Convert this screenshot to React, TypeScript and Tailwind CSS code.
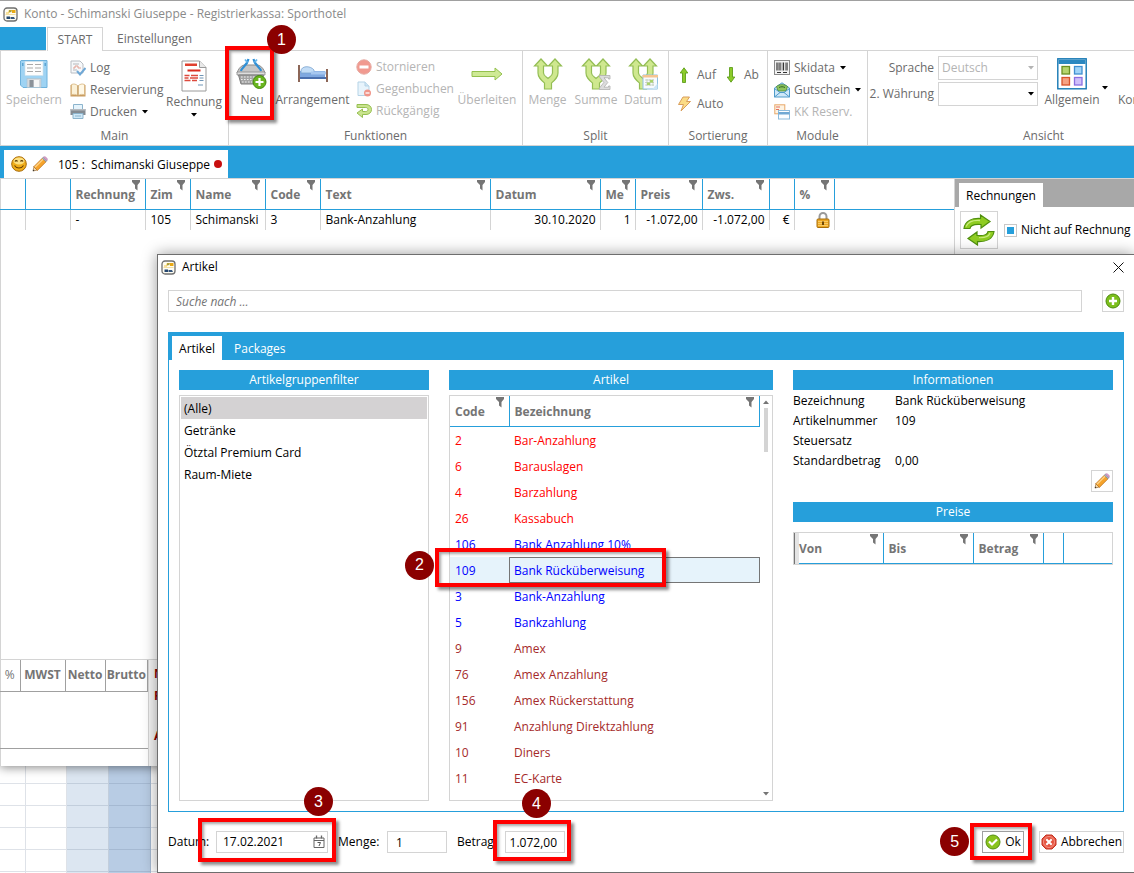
import type { ReactNode } from "react";
import clsx from "clsx";

type IconProps = { className?: string };

type Article = {
  code: string;
  name: string;
  color: string;
};

const articles: Article[] = [
  { code: "2", name: "Bar-Anzahlung", color: "text-[#ff0000]" },
  { code: "6", name: "Barauslagen", color: "text-[#ff0000]" },
  { code: "4", name: "Barzahlung", color: "text-[#ff0000]" },
  { code: "26", name: "Kassabuch", color: "text-[#ff0000]" },
  { code: "106", name: "Bank Anzahlung 10%", color: "text-[#0000ff]" },
  { code: "109", name: "Bank Rücküberweisung", color: "text-[#0000ff]" },
  { code: "3", name: "Bank-Anzahlung", color: "text-[#0000ff]" },
  { code: "5", name: "Bankzahlung", color: "text-[#0000ff]" },
  { code: "9", name: "Amex", color: "text-[#a52a2a]" },
  { code: "76", name: "Amex Anzahlung", color: "text-[#a52a2a]" },
  { code: "156", name: "Amex Rückerstattung", color: "text-[#a52a2a]" },
  { code: "91", name: "Anzahlung Direktzahlung", color: "text-[#a52a2a]" },
  { code: "10", name: "Diners", color: "text-[#a52a2a]" },
  { code: "11", name: "EC-Karte", color: "text-[#a52a2a]" },
];

const groups = ["(Alle)", "Getränke", "Ötztal Premium Card", "Raum-Miete"];

const bookingColumns = [
  { label: "", width: "w-[25px]", value: "", filter: false },
  { label: "", width: "w-[45px]", value: "", filter: false },
  { label: "Rechnung", width: "w-[75px]", value: "-", filter: true },
  { label: "Zim", width: "w-[45px]", value: "105", filter: true },
  { label: "Name", width: "w-[75px]", value: "Schimanski", filter: true },
  { label: "Code", width: "w-[55px]", value: "3", filter: true },
  { label: "Text", width: "w-[170px]", value: "Bank-Anzahlung", filter: true },
  { label: "Datum", width: "w-[110px]", value: "30.10.2020", filter: true, right: true },
  { label: "Me", width: "w-[35px]", value: "1", filter: true, right: true },
  { label: "Preis", width: "w-[67px]", value: "-1.072,00", filter: true, right: true },
  { label: "Zws.", width: "w-[67px]", value: "-1.072,00", filter: true, right: true },
  { label: "", width: "w-[25px]", value: "€", filter: false, right: true },
  { label: "%", width: "w-[40px]", value: "lock", filter: true, right: true },
];

const info = [
  ["Bezeichnung", "Bank Rücküberweisung"],
  ["Artikelnummer", "109"],
  ["Steuersatz", ""],
  ["Standardbetrag", "0,00"],
];

/* ---------- icons ---------- */

function LogoIcon() {
  return (
    <svg viewBox="0 0 15 15" className="size-[15px] shrink-0" aria-hidden="true">
      <rect x="1" y="1" width="13" height="13" rx="3" fill="#fffdf2" stroke="#6f6f6f" strokeWidth="1.3" />
      <path d="M3 6h3V3.500h3" fill="none" stroke="#f0c64a" strokeWidth="1" />
      <rect x="9" y="3" width="3.500" height="3" fill="#e9a915" />
      <rect x="6" y="3.200" width="2.500" height="2" fill="#a99d3a" />
      <path d="M2.500 7.500h10" stroke="#f3dfa0" strokeWidth="1" />
      <path d="M3.500 12V9.500h3.500V12z" fill="#24466f" />
      <path d="M7.500 12v-2h3.500l1 2z" fill="#35557c" />
    </svg>
  );
}

function Funnel() {
  return (
    <svg viewBox="0 0 8 11" className="h-[11px] w-[8px] shrink-0" aria-hidden="true">
      <path d="M0 0h8v2L5.500 5v5.500L3 8.500V5L0 2z" fill="#757575" />
    </svg>
  );
}

function Caret({ className = "text-black" }: IconProps) {
  return (
    <svg viewBox="0 0 6 4" className={clsx("h-[4px] w-[6px] shrink-0", className)} aria-hidden="true">
      <path d="M0 0h6L3 3.500z" fill="currentColor" />
    </svg>
  );
}

function SaveIcon() {
  return (
    <svg viewBox="0 0 28 28" className="size-[28px]" aria-hidden="true">
      <path d="M1 .5h26v27H3L.5 25V1z" fill="#9fd3f3" stroke="#6fb2dc" />
      <rect x="5" y="1.500" width="18" height="14" fill="#fdfdfd" stroke="#cfdfe9" strokeWidth=".6" />
      <path d="M7 4.500h6M15 4.500h6M7 8h6M15 8h6M7 11.500h6M15 11.500h6" stroke="#a9a9a9" />
      <rect x="2" y="3" width="1.500" height="3" fill="#5ea6d4" />
      <rect x="24.500" y="3" width="1.500" height="3" fill="#5ea6d4" />
      <rect x="7" y="18.500" width="14" height="9" fill="#d6d9dc" stroke="#a9c3d3" strokeWidth=".7" />
      <rect x="9.500" y="20" width="4" height="7" fill="#8b9299" />
      <rect x="14" y="20" width="5" height="7" fill="#f6f6f6" />
    </svg>
  );
}

function LogIcon() {
  return (
    <svg viewBox="0 0 16 16" className="size-[16px]" aria-hidden="true">
      <path d="M1 1h9l3 3v9H1z" fill="#f6f8fa" stroke="#b9bec4" />
      <path d="M3 4h6M3 10h4" stroke="#b4b8bc" />
      <path d="M3 8h2V6h3v2h3" fill="none" stroke="#e0a093" />
      <path d="M7 11l3 3.500L15.500 8" fill="none" stroke="#6fa8d6" strokeWidth="2" />
    </svg>
  );
}

function BookIcon() {
  return (
    <svg viewBox="0 0 16 16" className="size-[16px]" aria-hidden="true">
      <path d="M.5 3h3v10h9V3h3v11.500H.5z" fill="#c99b5e" />
      <path d="M1.500 2.500C4 1.500 6 2 8 4v10c-2-2-4-2-6.500-1z" fill="#fbf1d7" stroke="#d7b47c" strokeWidth=".8" />
      <path d="M14.500 2.500C12 1.500 10 2 8 4v10c2-2 4-2 6.500-1z" fill="#fff8e6" stroke="#d7b47c" strokeWidth=".8" />
      <path d="M8 3.500V14" stroke="#b98f55" />
    </svg>
  );
}

function PrinterIcon() {
  return (
    <svg viewBox="0 0 16 16" className="size-[16px]" aria-hidden="true">
      <path d="M3.500.5h9v5h-9z" fill="#e6f4fc" stroke="#8cb4cd" />
      <path d="M.5 5h15v6H.5z" fill="#848b92" />
      <path d="M.5 5h15v1.500H.5z" fill="#b6bbc0" />
      <path d="M3 9.500h10v5H3z" fill="#cfe8f7" stroke="#8cb4cd" />
      <path d="M5 12h6" stroke="#8cb4cd" />
    </svg>
  );
}

function InvoiceIcon() {
  return (
    <svg viewBox="0 0 26 32" className="h-[32px] w-[26px]" aria-hidden="true">
      <path d="M1 1h17.500L25 7.500V31H1z" fill="#fff" stroke="#9a9a9a" />
      <path d="M18.500 1v6.500H25" fill="#e9e9e9" stroke="#9a9a9a" />
      <rect x="4" y="3.500" width="12" height="2.500" fill="#e0402f" />
      <rect x="6.500" y="9.500" width="13" height="2" fill="#d92b1e" />
      <path d="M3.500 15.500h5M10 15.500h7M3.500 18h4M9 18h8M3.500 20.500h6M11 20.500h5" stroke="#dd4a3d" strokeWidth="1.300" />
      <path d="M18.500 15.500h4M18.500 18h4M18.500 20.500h4M17 25h5" stroke="#7095b5" strokeWidth="1.200" />
    </svg>
  );
}

function BasketIcon() {
  return (
    <svg viewBox="0 0 32 32" className="size-[32px]" aria-hidden="true">
      <path d="M1 15c1-3 3-7 7-8h14c4 1 6 5 7 8z" fill="#c6c6c6" stroke="#8b8b8b" />
      <path d="M1 14h28v3H1z" fill="#dedede" stroke="#8b8b8b" strokeWidth=".8" />
      <path d="M2.500 17h25L25 26H5z" fill="#a5a5a5" stroke="#7d7d7d" />
      <path d="M5 19h20M5 21.500h20M6 24h18" stroke="#ededed" strokeWidth="1.100" strokeDasharray="1.600 1.400" />
      <path d="M5 13c1-4 6-5 7.500-12M25 13c-1-4-6-5-7.500-12" fill="none" stroke="#2f8fd6" strokeWidth="2.200" />
      <path d="M9 1.500l2.500 3M21 1.500l-2.500 3" stroke="#63b5ea" strokeWidth="1.800" />
      <circle cx="23.500" cy="24" r="6.500" fill="#69b51f" stroke="#438a0c" />
      <path d="M23.500 20v8M19.500 24h8" stroke="#fff" strokeWidth="2.200" />
    </svg>
  );
}

function BedIcon() {
  return (
    <svg viewBox="0 0 32 20" className="h-[20px] w-[32px]" aria-hidden="true">
      <path d="M3 7h25v8H3z" fill="#7fa8e0" />
      <path d="M4 7c0-5 9-6 13-1v3H4z" fill="#c2dcf6" stroke="#7aa3cf" strokeWidth=".8" />
      <path d="M14 7.500h15v3H14z" fill="#a6c7f0" />
      <path d="M3 13h26v2H3z" fill="#4a6fae" />
      <path d="M1 1h2v17H1zM29 5h2v13h-2z" fill="#8c6657" />
    </svg>
  );
}

function StopIcon() {
  return (
    <svg viewBox="0 0 16 16" className="size-[16px]" aria-hidden="true">
      <circle cx="8" cy="8" r="7.200" fill="#f19a90" stroke="#e6aaa2" />
      <rect x="3.500" y="6.500" width="9" height="3" fill="#fff" />
    </svg>
  );
}

function PageMinusIcon() {
  return (
    <svg viewBox="0 0 16 16" className="size-[16px]" aria-hidden="true">
      <path d="M2 1h7l4 4v9.500H2z" fill="#e8f4fc" stroke="#b5d3e6" />
      <path d="M9 1v4h4" fill="#cfe5f4" stroke="#b5d3e6" />
      <circle cx="11.500" cy="12" r="3.500" fill="#f0958a" />
      <path d="M9.500 12h4" stroke="#fff" strokeWidth="1.300" />
    </svg>
  );
}

function UndoIcon() {
  return (
    <svg viewBox="0 0 16 16" className="size-[16px]" aria-hidden="true">
      <path
        d="M1 1.500h9c3 0 5.500 2 5.500 5s-2.500 5-5.500 5H6.500V14.500L1 10l5.500-4v2.500h3.300c1.300 0 2.200-.8 2.200-2s-1-2-2.200-2H1z"
        fill="#c9e48e"
        stroke="#96bf52"
      />
    </svg>
  );
}

function TransferIcon() {
  return (
    <svg viewBox="0 0 32 16" className="h-[16px] w-[32px]" aria-hidden="true">
      <path d="M1 5.500h23V2l7 6-7 6v-3.500H1z" fill="#cfea95" stroke="#94c14e" />
    </svg>
  );
}

function SplitArrow() {
  return (
    <path
      d="M11.500 31V25C8 22 5 19.500 5 15V8H1.500L8 1l6.500 7H10.500v7c0 2.500 2 3.500 4.500 5.500 2.500-2 4.500-3 4.500-5.500V8h-4L22 1l6.500 7h-3.500v7c0 4.500-3 7-6.500 10v6z"
      fill="#cfe88f"
      stroke="#94be55"
      strokeWidth="1.200"
    />
  );
}

function SplitIcon() {
  return (
    <svg viewBox="0 0 30 32" className="h-[32px] w-[30px]" aria-hidden="true">
      <SplitArrow />
    </svg>
  );
}

function SplitSumIcon() {
  return (
    <svg viewBox="0 0 30 32" className="h-[32px] w-[30px]" aria-hidden="true">
      <SplitArrow />
      <path
        d="M18.500 17.500h10.500v3.500h-1.500v-1.200h-4.500l3.800 4.700-3.800 4.700h4.500V28h1.500v3.500H18.500V30l4.300-5.500-4.300-5.500z"
        fill="#dcdcdc"
        stroke="#b0b0b0"
        strokeWidth=".8"
      />
    </svg>
  );
}

function SplitDateIcon() {
  return (
    <svg viewBox="0 0 30 32" className="h-[32px] w-[30px]" aria-hidden="true">
      <SplitArrow />
      <path d="M15 17h14.500v14H15z" fill="#f8fbff" stroke="#8fc0e0" />
      <path d="M14.500 17h15.500v2.500H14.500z" fill="#f6c591" />
      <path d="M17 22h9M17 24.500h9M17 27h9M19 21v7M22 21v7M25 21v7" stroke="#b9c6b0" strokeWidth=".7" />
      <path d="M22 22h3v2.500h-3zM19 24.500h3V27h-3z" fill="#a8d26a" />
      <path d="M24.500 31l5-5.500V31z" fill="#cde6f7" />
    </svg>
  );
}

function UpArrowIcon({ className }: IconProps) {
  return (
    <svg viewBox="0 0 10 16" className={clsx("h-[16px] w-[10px]", className)} aria-hidden="true">
      <path d="M3.500 15.500V6H1.200L5 .8 8.800 6H6.500v9.500z" fill="#8ccb2a" stroke="#5f9e1b" strokeWidth=".9" />
    </svg>
  );
}

function BoltIcon() {
  return (
    <svg viewBox="0 0 16 16" className="size-[16px]" aria-hidden="true">
      <path d="M6 1h6.500L9.500 5.500h4L4 15l2.500-6.500H1.500z" fill="#fbdc86" stroke="#d99e5c" />
    </svg>
  );
}

function BarcodeIcon() {
  return (
    <svg viewBox="0 0 16 16" className="size-[16px]" aria-hidden="true">
      <rect x=".5" y=".5" width="15" height="14" fill="#f3f3f3" stroke="#8a8a8a" />
      <path d="M3 2.500v8M6 2.500v8M9.500 2.500v8M13 2.500v8" stroke="#333" strokeWidth="1.200" />
      <path d="M4.500 2.500v8M8 2.500v8M11.500 2.500v8" stroke="#555" strokeWidth=".6" />
      <path d="M3 12.500h4M9 12.500h4" stroke="#333" />
    </svg>
  );
}

function VoucherIcon() {
  return (
    <svg viewBox="0 0 16 16" className="size-[16px]" aria-hidden="true">
      <path d="M.5 6L8 .8 15.500 6v9H.5z" fill="#cfe8f8" stroke="#4f9bca" />
      <path d="M2.500 4.500C5 2 11 2 13.500 4.500L12 9H4z" fill="#8fc35e" stroke="#4e8c33" strokeWidth=".8" />
      <path d="M5 5.500c2-1 4-1 6 0" fill="none" stroke="#2f6a25" />
      <path d="M.5 6.500l5.500 4L.5 15M15.500 6.500l-5.500 4 5.500 4.500M6 10.500h4" fill="none" stroke="#4f9bca" />
    </svg>
  );
}

function CardsIcon() {
  return (
    <svg viewBox="0 0 16 16" className="size-[16px]" aria-hidden="true">
      <rect x=".8" y=".8" width="10" height="9" fill="#fdf3e3" stroke="#e8a869" />
      <path d="M2 3h4M2 5.500h3" stroke="#e5705c" strokeWidth="1.200" />
      <rect x="4.500" y="6.500" width="11" height="8.500" fill="#fafdff" stroke="#8cbbdc" />
      <rect x="4.500" y="8" width="11" height="2.500" fill="#6fa8d3" />
    </svg>
  );
}

function LayoutIcon() {
  return (
    <svg viewBox="0 0 30 32" className="h-[32px] w-[30px]" aria-hidden="true">
      <rect x=".8" y=".8" width="28.400" height="30" fill="#fff" stroke="#1578b3" strokeWidth="1.400" />
      <rect x="1.500" y="1.500" width="27" height="4.500" fill="#2a87c0" />
      <rect x="5" y="8.500" width="7.500" height="7.500" fill="#b5d46d" stroke="#6b8f22" strokeWidth="1.300" />
      <rect x="17.500" y="8.500" width="7.500" height="7.500" fill="#9fd4f8" stroke="#3f8fd0" strokeWidth="1.300" />
      <rect x="5" y="19.500" width="7.500" height="7.500" fill="#f6a283" stroke="#d8532a" strokeWidth="1.300" />
      <rect x="17.500" y="19.500" width="7.500" height="7.500" fill="#cfbffa" stroke="#8a6fe0" strokeWidth="1.300" />
    </svg>
  );
}

function SmileyIcon() {
  return (
    <svg viewBox="0 0 16 16" className="size-[16px] shrink-0" aria-hidden="true">
      <circle cx="8" cy="8" r="7.300" fill="#f0ae1a" stroke="#a86a08" />
      <ellipse cx="8" cy="5" rx="5.500" ry="3.500" fill="#fde080" />
      <path d="M4 5.500c.5-1.200 2-1.200 2.500 0M9.500 5.500c.5-1.200 2-1.200 2.500 0" fill="none" stroke="#5b3a00" strokeWidth="1.100" />
      <path d="M3.500 9.500c2 3.300 7 3.300 9 0" fill="none" stroke="#6b3f00" strokeWidth="1.100" />
    </svg>
  );
}

function PencilIcon() {
  return (
    <svg viewBox="0 0 16 16" className="size-[16px] shrink-0" aria-hidden="true">
      <path d="M1 15l1-4.500 3.500 3.500z" fill="#f4dcb0" stroke="#8b5a20" strokeWidth=".6" />
      <path d="M.8 15.200l.4-1.600 1.300 1.200z" fill="#333" />
      <path d="M1.800 10.700l8.500-8.500 3.700 3.600-8.600 8.600z" fill="#f6a32b" stroke="#b36a14" strokeWidth=".7" />
      <path d="M3 11.200l8.300-8.200" stroke="#fdd48a" strokeWidth="1.200" />
      <path d="M10.300 2.200l1.100-1.100 3.700 3.600-1.100 1.100z" fill="#a9b6c2" stroke="#77838f" strokeWidth=".5" />
      <path d="M11.500 1.200c1.500-1.700 5 1.600 3.500 3.400z" fill="#dfa0d0" stroke="#a8709f" strokeWidth=".5" />
    </svg>
  );
}

function LockIcon() {
  return (
    <svg viewBox="0 0 14 16" className="h-[16px] w-[14px]" aria-hidden="true">
      <path d="M3.500 8V4.500a3.500 3.500 0 0 1 7 0V8" fill="none" stroke="#9a9a9a" strokeWidth="2" />
      <rect x="1" y="7" width="12" height="8.500" rx="1" fill="#eda824" stroke="#a86e0a" />
      <path d="M2 9.500h10M2 11.500h10M2 13.500h10" stroke="#fad372" strokeWidth=".8" />
      <path d="M6 9.500h2v3.500H6z" fill="#6e4705" />
    </svg>
  );
}

function RefreshIcon() {
  return (
    <svg viewBox="0 0 32 32" className="size-[32px]" aria-hidden="true">
      <path d="M1 14.500C2 7 9 4 17.500 4.500V1L27 7.500 18 14v-3.500C12 10 7.500 11 7 14.500z" fill="#8fcc22" stroke="#4f8f0d" strokeWidth="1.200" />
      <path d="M31 17.500C30 25 23 28 14.500 27.500V31L5 24.500 14 18v3.500c6 .5 10.500-.5 11-4z" fill="#8fcc22" stroke="#4f8f0d" strokeWidth="1.200" />
      <path d="M3 12.500C5 8 10 6 17 6.500" fill="none" stroke="#c9ec7d" strokeWidth="1.300" />
      <path d="M27 19c-1 3-5 5-11 4.700" fill="none" stroke="#c9ec7d" strokeWidth="1.200" />
    </svg>
  );
}

function PlusIcon() {
  return (
    <svg viewBox="0 0 16 16" className="size-[16px]" aria-hidden="true">
      <circle cx="8" cy="8" r="7" fill="#7cbf1c" stroke="#4c8a0e" />
      <path d="M8 4v8M4 8h8" stroke="#fff" strokeWidth="2.400" />
    </svg>
  );
}

function OkIcon() {
  return (
    <svg viewBox="0 0 16 16" className="size-[16px]" aria-hidden="true">
      <circle cx="8" cy="8" r="7" fill="#8ac31c" stroke="#568f10" />
      <path d="M4 7.500L7 10.500 12 5.500" fill="none" stroke="#fff" strokeWidth="2.200" />
    </svg>
  );
}

function CancelIcon() {
  return (
    <svg viewBox="0 0 16 16" className="size-[16px]" aria-hidden="true">
      <path d="M5 1h6l4 4v6l-4 4H5l-4-4V5z" fill="#e5533f" stroke="#c23222" />
      <circle cx="8" cy="8" r="5.500" fill="none" stroke="#f7a297" strokeWidth=".8" />
      <path d="M5.300 5.300l5.400 5.400M10.700 5.300l-5.400 5.400" stroke="#fff" strokeWidth="2" />
    </svg>
  );
}

function CalendarIcon() {
  return (
    <svg viewBox="0 0 12 14" className="h-[14px] w-[12px]" aria-hidden="true">
      <path d="M1 3h10v9.500H1zM1 5.500h10" fill="none" stroke="#666" />
      <path d="M3.500.5v3M8.500.5v3" stroke="#666" strokeWidth="1.300" />
      <path d="M4.500 7.500h3L6 11" fill="none" stroke="#555" />
    </svg>
  );
}

/* ---------- building blocks ---------- */

// Numbered marker with the red frame around its parent; the parent has to be relative.
function Step({ n, frame, badge }: { n: number; frame: string; badge: string }) {
  return (
    <span
      className={clsx(
        "pointer-events-none absolute z-10 border-4 border-[#ff0000] shadow-[3px_3px_3px_rgba(0,0,0,0.45),inset_2px_2px_3px_rgba(0,0,0,0.35)]",
        frame,
      )}
    >
      <span
        className={clsx(
          "absolute flex size-[29px] items-center justify-center rounded-full bg-[#8b0000] font-['Liberation_Sans',sans-serif] text-base text-white",
          badge,
        )}
      >
        {n}
      </span>
    </span>
  );
}

function RibbonGroup({ label, className, children }: { label: string; className: string; children: ReactNode }) {
  return (
    <section className={clsx("flex shrink-0 flex-col border-r border-[#d4d4d4]", className)}>
      <div className="flex h-[75px] items-start pt-[5px]">{children}</div>
      <h2 className="text-center leading-[19px]">{label}</h2>
    </section>
  );
}

type BigButtonProps = {
  icon: ReactNode;
  label: string;
  className: string;
  disabled?: boolean;
  caret?: boolean;
  children?: ReactNode;
};

function BigButton({ icon, label, className, disabled, caret, children }: BigButtonProps) {
  return (
    <button
      type="button"
      disabled={disabled}
      className={clsx("relative flex shrink-0 flex-col items-center whitespace-nowrap disabled:text-[#b4b4b4]", className)}
    >
      <span className="flex h-[36px] items-center justify-center">{icon}</span>
      <span className="leading-4">{label}</span>
      {caret ? <Caret className="mt-[3px] text-black" /> : null}
      {children}
    </button>
  );
}

type SmallButtonProps = {
  icon: ReactNode;
  label: string;
  disabled?: boolean;
  caret?: boolean;
};

function SmallButton({ icon, label, disabled, caret }: SmallButtonProps) {
  return (
    <button
      type="button"
      disabled={disabled}
      className="flex h-[22px] items-center gap-1 whitespace-nowrap disabled:text-[#b4b4b4]"
    >
      {icon}
      {label}
      {caret ? <Caret className="ml-px text-black" /> : null}
    </button>
  );
}

function HeaderCell({ label, filter = true }: { label: string; filter?: boolean }) {
  return (
    <div className="flex h-[30px] justify-between pt-px pr-[5px] pl-[5px]">
      <span className="mt-[7px] min-w-0 leading-4">{label}</span>
      {filter ? <Funnel /> : null}
    </div>
  );
}

function PanelTitle({ children }: { children: ReactNode }) {
  return <h3 className="h-[20px] bg-[#269fdb] text-center leading-5 text-white">{children}</h3>;
}

/* ---------- main window ---------- */

function Ribbon() {
  return (
    <div className="flex h-[95px] shrink-0 border-b border-l border-[#d4d4d4] text-[#6b6b6b]">
      <RibbonGroup label="Main" className="w-[228px]">
        <BigButton icon={<SaveIcon />} label="Speichern" className="ml-[2px] w-[62px]" disabled />
        <div className="ml-[5px] w-[96px] pt-px">
          <SmallButton icon={<LogIcon />} label="Log" />
          <SmallButton icon={<BookIcon />} label="Reservierung" />
          <SmallButton icon={<PrinterIcon />} label="Drucken" caret />
        </div>
        <BigButton icon={<InvoiceIcon />} label="Rechnung" className="w-[56px] pt-[2px]" caret />
      </RibbonGroup>

      <RibbonGroup label="Funktionen" className="w-[294px]">
        <BigButton icon={<BasketIcon />} label="Neu" className="w-[46px]">
          <Step n={1} frame="-top-[10px] -left-[4px] h-[74px] w-[49px]" badge="-top-[25px] left-[38px]" />
        </BigButton>
        <BigButton icon={<BedIcon />} label="Arrangement" className="w-[75px]" />
        <div className="ml-[6px] w-[100px]">
          <SmallButton icon={<StopIcon />} label="Stornieren" disabled />
          <SmallButton icon={<PageMinusIcon />} label="Gegenbuchen" disabled />
          <SmallButton icon={<UndoIcon />} label="Rückgängig" disabled />
        </div>
        <BigButton icon={<TransferIcon />} label="Überleiten" className="w-[62px]" disabled />
      </RibbonGroup>

      <RibbonGroup label="Split" className="w-[146px]">
        <BigButton icon={<SplitIcon />} label="Menge" className="w-[49px]" disabled />
        <BigButton icon={<SplitSumIcon />} label="Summe" className="w-[48px]" disabled />
        <BigButton icon={<SplitDateIcon />} label="Datum" className="w-[46px]" disabled />
      </RibbonGroup>

      <RibbonGroup label="Sortierung" className="w-[99px]">
        <div className="flex flex-col gap-[7px] pt-2 pl-[8px]">
          <div className="flex gap-[10px]">
            <SmallButton icon={<UpArrowIcon className="mr-1 ml-[2px]" />} label="Auf" />
            <SmallButton icon={<UpArrowIcon className="mr-1 rotate-180" />} label="Ab" />
          </div>
          <SmallButton icon={<BoltIcon />} label="Auto" />
        </div>
      </RibbonGroup>

      <RibbonGroup label="Module" className="w-[100px]">
        <div className="pt-px pl-[6px]">
          <SmallButton icon={<BarcodeIcon />} label="Skidata" caret />
          <SmallButton icon={<VoucherIcon />} label="Gutschein" caret />
          <SmallButton icon={<CardsIcon />} label="KK Reserv." disabled />
        </div>
      </RibbonGroup>

      <RibbonGroup label="Ansicht" className="w-[352px]">
        <div className="grid shrink-0 grid-cols-[66px_100px] items-center gap-x-1 gap-y-[2px] whitespace-nowrap">
          <label htmlFor="language" className="text-right">
            Sprache
          </label>
          <span className="relative">
            <select
              id="language"
              disabled
              className="block h-[24px] w-full appearance-none border border-[#d4d4d4] px-[3px] text-[#b4b4b4]"
            >
              <option>Deutsch</option>
            </select>
            <Caret className="absolute top-[10px] right-1 text-[#b4b4b4]" />
          </span>
          <label htmlFor="currency" className="text-right">
            2. Währung
          </label>
          <span className="relative">
            <select
              id="currency"
              className="block h-[24px] w-full appearance-none border border-[#d4d4d4] px-[3px]"
            />
            <Caret className="absolute top-[10px] right-1 text-black" />
          </span>
        </div>
        <BigButton icon={<LayoutIcon />} label="Allgemein" className="ml-[4px] w-[60px]" />
        <Caret className="mt-[30px] text-black" />
        <BigButton icon={null} label="Konto" className="ml-[10px]" />
      </RibbonGroup>
    </div>
  );
}

function BookingTable() {
  return (
    <table className="w-full table-fixed border-collapse text-left">
      <thead>
        <tr className="border-b border-[#269fdb] text-[#757575]">
          {bookingColumns.map((column, index) => (
            <th key={index} className={clsx("border-r border-[#269fdb] p-0 font-bold", column.width)}>
              <HeaderCell label={column.label} filter={column.filter} />
            </th>
          ))}
          <th className="p-0" />
        </tr>
      </thead>
      <tbody>
        <tr>
          {bookingColumns.map((column, index) => (
            <td
              key={index}
              className={clsx(
                "h-[20px] border-r border-[#d4d4d4] py-0 leading-5 whitespace-nowrap",
                column.right ? "pr-1 text-right" : "pl-[5px]",
              )}
            >
              {column.value === "lock" ? (
                <span className="flex justify-end">
                  <LockIcon />
                </span>
              ) : (
                column.value
              )}
            </td>
          ))}
          <td />
        </tr>
      </tbody>
    </table>
  );
}

function TaxTotals() {
  return (
    <div className="flex h-[107px] border-t border-[#d4d4d4]">
      <div className="w-[149px] border-r border-[#d4d4d4]">
        <table className="w-full table-fixed border-collapse text-[#757575]">
          <thead>
            <tr className="border-b border-[#a0a0a0]">
              <th className="h-[31px] w-[20px] border-r border-[#a0a0a0] p-0 text-center font-normal">%</th>
              <th className="w-[45px] border-r border-[#a0a0a0] p-0 text-center">MWST</th>
              <th className="w-[40px] border-r border-[#a0a0a0] p-0 text-center">Netto</th>
              <th className="border-r border-[#a0a0a0] p-0 text-center">Brutto</th>
            </tr>
          </thead>
        </table>
        <div className="h-[57px] border-b border-[#a0a0a0]" />
      </div>
      <div className="flex flex-1 flex-col gap-[6px] bg-[#f5f5f5] pt-[6px] pl-[5px] font-bold text-[#8b0000]">
        <span className="leading-4">N</span>
        <span className="leading-4">F</span>
        <span className="mt-[18px] leading-4">A</span>
      </div>
    </div>
  );
}

function InvoicePane() {
  return (
    <aside className="w-[180px] shrink-0 border-l border-[#d4d4d4]">
      <div className="flex h-[28px] items-end bg-[#a8a8a8] pl-1">
        <button type="button" className="h-[24px] bg-white px-[7px] pt-px">
          Rechnungen
        </button>
      </div>
      <div className="flex items-center gap-[6px] pt-1 pl-[5px] whitespace-nowrap">
        <button type="button" aria-label="Aktualisieren" className="flex size-[38px] shrink-0 items-center justify-center border border-[#d4d4d4]">
          <RefreshIcon />
        </button>
        <label className="flex items-center gap-[4px]">
          <input
            type="checkbox"
            defaultChecked
            className="size-[13px] appearance-none border border-[#c8c8c8] bg-white bg-clip-content p-[2px] checked:bg-[#269fdb]"
          />
          Nicht auf Rechnung
        </label>
      </div>
    </aside>
  );
}

function AccountWindow() {
  return (
    <main className="relative z-10 flex flex-1 flex-col border-t border-[#a0a0a0] bg-white shadow-[0_1px_10px_rgba(0,0,0,0.5)]">
      <header className="flex h-[26px] shrink-0 items-center gap-[6px] pl-[3px] text-[#8a8a8a]">
        <LogoIcon />
        <h1>Konto - Schimanski Giuseppe - Registrierkassa: Sporthotel</h1>
      </header>

      <nav className="flex h-[24px] shrink-0 text-[#6b6b6b]">
        <button type="button" aria-label="Datei" className="w-[46px] border-b border-[#d4d4d4] bg-[#269fdb]" />
        <button type="button" className="ml-px w-[56px] border-x border-t border-[#d4d4d4]">
          START
        </button>
        <div className="flex-1 border-b border-[#d4d4d4] pl-[14px]">
          <button type="button" className="h-full pt-px">
            Einstellungen
          </button>
        </div>
      </nav>

      <Ribbon />

      <div className="flex h-[32px] shrink-0 items-end bg-[#269fdb] pl-1">
        <button type="button" className="flex h-[28px] items-center bg-white pr-[6px] pl-[7px]">
          <SmileyIcon />
          <span className="ml-[5px]">
            <PencilIcon />
          </span>
          <span className="ml-[10px] pt-px whitespace-pre">105 :  Schimanski Giuseppe</span>
          <span className="ml-[4px] size-[8px] rounded-full bg-[#c80f0f]" />
        </button>
      </div>

      <div className="flex flex-1 border-t border-[#d4d4d4]">
        <div className="flex min-w-0 flex-1 flex-col justify-between shadow-[inset_1px_0_0_#d4d4d4]">
          <BookingTable />
          <TaxTotals />
        </div>
        <InvoicePane />
      </div>
    </main>
  );
}

// Room plan that shows below the account window.
function RoomPlan() {
  const columns = ["w-[26px]", "w-[41px]", "w-[42px] bg-[#dce6f1]", "w-[42px] bg-[#b8cce4]", "flex-1"];

  return (
    <div className="flex h-[107px] shrink-0 overflow-hidden bg-white">
      {columns.map((column) => (
        <div key={column} className={clsx("border-r border-[#5a6e8c]/20", column)}>
          <div className="h-[18px] border-b border-[#5a6e8c]/20" />
          {[1, 2, 3, 4].map((row) => (
            <div key={row} className="h-[22px] border-b border-[#5a6e8c]/20" />
          ))}
        </div>
      ))}
    </div>
  );
}

/* ---------- article dialog ---------- */

function ArticleTable() {
  return (
    <div className="flex flex-1 border border-[#d4d4d4]">
      <table className="h-fit flex-1 table-fixed border-collapse text-left">
        <thead>
          <tr className="border-b border-[#269fdb] text-[#757575]">
            <th className="w-[59px] border-r border-[#269fdb] p-0 font-bold">
              <HeaderCell label="Code" />
            </th>
            <th className="border-r border-[#269fdb] p-0 font-bold">
              <HeaderCell label="Bezeichnung" />
            </th>
          </tr>
        </thead>
        <tbody>
          {articles.map((article) => {
            const selected = article.code === "109";

            return (
              <tr key={article.code} className={clsx(article.color, selected && "bg-[#e6f3fb]")}>
                <td className="relative h-[26px] p-0 pt-[2px] pl-[5px]">
                  {article.code}
                  {selected ? (
                    <Step n={2} frame="-top-[9px] -left-[15px] h-[39px] w-[231px]" badge="-left-[34px] -top-px" />
                  ) : null}
                </td>
                <td className={clsx("p-0 pt-[2px] pl-[5px]", selected && "outline -outline-offset-1 outline-[#757575]")}>
                  {article.name}
                </td>
              </tr>
            );
          })}
        </tbody>
      </table>
      <div className="flex w-[12px] flex-col items-center py-1" aria-hidden="true">
        <Caret className="rotate-180 text-[#757575]" />
        <span className="mt-1 h-[44px] w-[4px] bg-[#d4d4d4]" />
        <Caret className="mt-auto text-[#757575]" />
      </div>
    </div>
  );
}

function PriceTable() {
  return (
    <div className="flex border border-[#d4d4d4]">
      <span className="w-[5px] border-l border-[#757575] bg-[#e4e4e4]" />
      <table className="flex-1 table-fixed border-collapse text-left">
        <thead>
          <tr className="border-b border-[#269fdb] text-[#757575]">
            <th className="w-[84px] border-r border-[#269fdb] p-0 font-bold [&>div]:pl-0">
              <HeaderCell label="Von" />
            </th>
            <th className="w-[90px] border-r border-[#269fdb] p-0 font-bold">
              <HeaderCell label="Bis" />
            </th>
            <th className="w-[70px] border-r border-[#269fdb] p-0 font-bold">
              <HeaderCell label="Betrag" />
            </th>
            <th className="w-[20px] border-r border-[#269fdb] p-0" />
            <th className="p-0" />
          </tr>
        </thead>
      </table>
    </div>
  );
}

function ArticleDialog() {
  return (
    <div
      role="dialog"
      aria-label="Artikel"
      className="absolute top-[254px] right-0 bottom-0 left-[157px] z-20 flex flex-col border-y border-l border-[#6e6e6e] bg-white px-[10px] shadow-[0_0_14px_rgba(0,0,0,0.4)]"
    >
      <header className="-ml-[7px] flex h-[24px] items-center gap-[6px]">
        <LogoIcon />
        <h2 className="flex-1">Artikel</h2>
        <button type="button" aria-label="Schließen">
          <svg viewBox="0 0 11 11" className="size-[11px]" aria-hidden="true">
            <path d="M.5.5l10 10M10.500.5l-10 10" stroke="#111" />
          </svg>
        </button>
      </header>

      <div className="mt-[11px] flex gap-5">
        <input
          type="text"
          aria-label="Suche"
          placeholder="Suche nach ..."
          className="h-[22px] min-w-0 flex-1 border border-[#d4d4d4] px-[7px] placeholder:text-[#757575] placeholder:italic"
        />
        <button type="button" aria-label="Neuer Artikel" className="flex size-[22px] items-center justify-center border border-[#d4d4d4]">
          <PlusIcon />
        </button>
      </div>

      <div className="mt-[20px] flex flex-1 flex-col border border-[#269fdb]">
        <nav className="flex h-[27px] items-end bg-[#269fdb] pl-[3px]">
          <button type="button" className="h-[24px] w-[50px] bg-white pt-[2px]">
            Artikel
          </button>
          <button type="button" className="h-[24px] px-3 pt-[2px] text-white">
            Packages
          </button>
        </nav>

        <div className="flex flex-1 gap-5 p-[10px]">
          <section className="flex w-[250px] shrink-0 flex-col gap-[5px]">
            <PanelTitle>Artikelgruppenfilter</PanelTitle>
            <ul className="flex-1 border border-[#d4d4d4] p-px">
              {groups.map((group, index) => (
                <li key={group} className={clsx("h-[22px] pl-[3px] leading-[24px]", index === 0 && "bg-[#d4d2d3]")}>
                  {group}
                </li>
              ))}
            </ul>
          </section>

          <section className="flex w-[324px] shrink-0 flex-col gap-[5px]">
            <PanelTitle>Artikel</PanelTitle>
            <ArticleTable />
          </section>

          <section className="flex min-w-0 flex-1 flex-col">
            <PanelTitle>Informationen</PanelTitle>
            <dl>
              {info.map(([label, value]) => (
                <div key={label} className="flex h-[20px] leading-[22px]">
                  <dt className="w-[102px]">{label}</dt>
                  <dd>{value}</dd>
                </div>
              ))}
            </dl>
            <button
              type="button"
              aria-label="Bearbeiten"
              className="flex size-[22px] items-center justify-center self-end border border-[#d4d4d4]"
            >
              <PencilIcon />
            </button>
            <div className="my-[10px]">
              <PanelTitle>Preise</PanelTitle>
            </div>
            <PriceTable />
          </section>
        </div>
      </div>

      <footer className="flex h-[60px] items-center">
        <label htmlFor="date" className="w-[48px]">
          Datum:
        </label>
        <div className="relative flex h-[22px] w-[112px] items-center border border-[#d4d4d4]">
          <input id="date" type="text" defaultValue="17.02.2021" className="min-w-0 flex-1 pl-[6px] outline-none" />
          <button type="button" aria-label="Kalender" className="pr-[2px]">
            <CalendarIcon />
          </button>
          <Step n={3} frame="-top-[14px] -left-[19px] h-[44px] w-[138px]" badge="-top-[35px] left-[102px]" />
        </div>
        <label htmlFor="amount" className="ml-[10px] w-[49px]">
          Menge:
        </label>
        <input
          id="amount"
          type="text"
          defaultValue="1"
          className="h-[22px] w-[60px] border border-[#d4d4d4] px-2"
        />
        <label htmlFor="price" className="ml-[10px] w-[48px]">
          Betrag:
        </label>
        <div className="relative">
          <input
            id="price"
            type="text"
            defaultValue="1.072,00"
            className="block h-[22px] w-[60px] border border-[#d4d4d4] pr-[7px] text-right"
          />
          <Step n={4} frame="-top-[11px] -left-[12px] h-[41px] w-[78px]" badge="-top-[35px] left-[25px]" />
        </div>
        <div className="ml-auto flex gap-[15px]">
          <button type="button" className="relative flex h-[22px] items-center gap-1 border border-[#a0a0a0] px-[2px]">
            <OkIcon />
            Ok
            <Step n={5} frame="-top-[9px] -left-[13px] h-[37px] w-[62px]" badge="top-0 -left-[34px]" />
          </button>
          <button type="button" className="flex h-[22px] items-center gap-1 border border-[#d4d4d4] px-px">
            <CancelIcon />
            Abbrechen
          </button>
        </div>
      </footer>
    </div>
  );
}

export default function App() {
  return (
    <div className="relative flex min-h-screen flex-col overflow-hidden bg-white font-['Open_Sans','Noto_Sans',sans-serif] text-xs text-black">
      <AccountWindow />
      <RoomPlan />
      <ArticleDialog />
    </div>
  );
}
